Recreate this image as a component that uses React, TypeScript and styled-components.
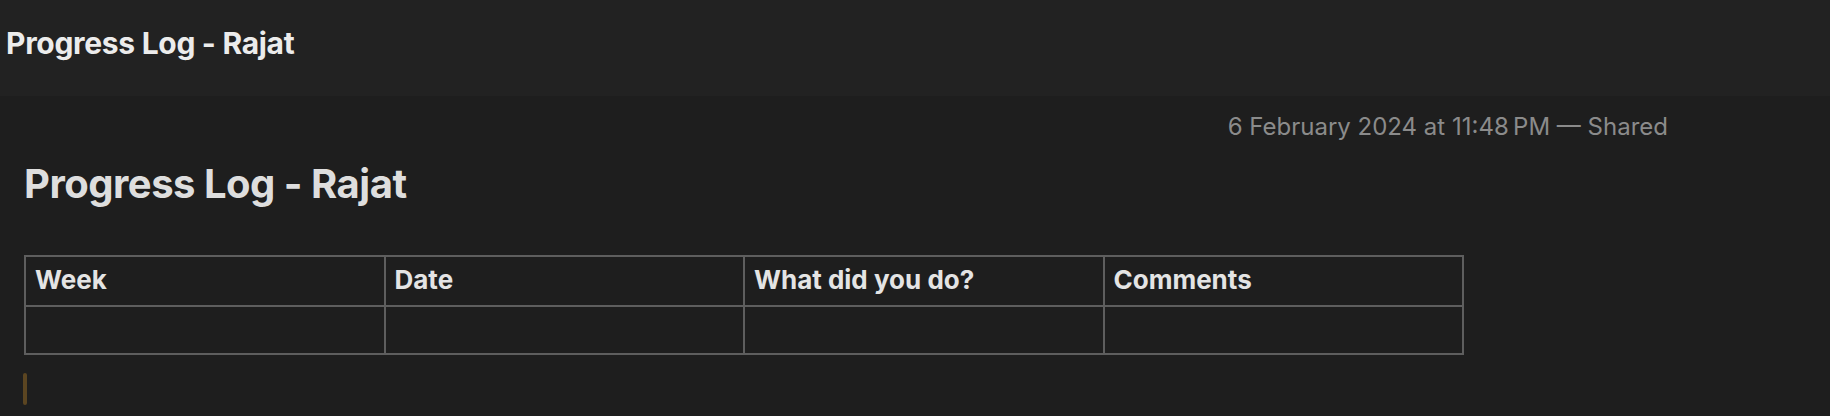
import React from "react";
import styled, { createGlobalStyle } from "styled-components";

const GlobalStyle = createGlobalStyle`
  html, body {
    margin: 0;
    padding: 0;
    background: #1e1e1e;
    font-family: Inter, "Noto Sans", "Liberation Sans", sans-serif;
  }
  * { box-sizing: border-box; }
`;

const Page = styled.div`
  width: 1830px;
  height: 416px;
  overflow: hidden;
  background: #1e1e1e;
  display: flex;
  flex-direction: column;
`;

const TopBar = styled.header`
  height: 96px;
  flex: none;
  background: #222222;
  padding: 28px 0 0 6px;
`;

const BarTitle = styled.h1`
  margin: 0;
  font-size: 30px;
  line-height: 30px;
  font-weight: 700;
  color: #ececec;
  letter-spacing: -0.3px;
`;

const Content = styled.main`
  padding: 19px 0 0 24px;
  display: flex;
  flex-direction: column;
`;

const MetaRow = styled.div`
  display: flex;
  justify-content: flex-end;
  padding-right: 162px;
`;

const Meta = styled.span`
  font-size: 24px;
  line-height: 24px;
  color: #8b8b8b;
`;

const NoteTitle = styled.h2`
  margin: 24px 0 0 0;
  font-size: 40px;
  line-height: 41px;
  font-weight: 700;
  color: #dedede;
  letter-spacing: -0.5px;
`;

const Table = styled.table`
  margin-top: 51px;
  width: 1440px;
  border-collapse: collapse;
  table-layout: fixed;
  border: 2px solid #5e5e5e;
`;

const HeadCell = styled.th`
  border: 2px solid #5e5e5e;
  height: 50px;
  padding: 0 9px 4px 9px;
  text-align: left;
  vertical-align: middle;
  font-size: 26px;
  font-weight: 700;
  color: #e4e4e4;
`;

const BodyCell = styled.td`
  border: 2px solid #5e5e5e;
  height: 48px;
  padding: 0 9px;
`;

const Caret = styled.div`
  margin-top: 18px;
  margin-left: -1px;
  width: 4px;
  height: 32px;
  border-radius: 2px;
  background: #5b4521;
`;

const columns = ["Week", "Date", "What did you do?", "Comments"];

export default function App() {
  return (
    <>
      <GlobalStyle />
      <Page>
        <TopBar>
          <BarTitle>Progress Log - Rajat</BarTitle>
        </TopBar>
        <Content>
          <MetaRow>
            <Meta>6 February 2024 at 11:48&#8239;PM — Shared</Meta>
          </MetaRow>
          <NoteTitle>Progress Log - Rajat</NoteTitle>
          <Table>
            <thead>
              <tr>
                {columns.map((c) => (
                  <HeadCell key={c}>{c}</HeadCell>
                ))}
              </tr>
            </thead>
            <tbody>
              <tr>
                {columns.map((c) => (
                  <BodyCell key={c} />
                ))}
              </tr>
            </tbody>
          </Table>
          <Caret />
        </Content>
      </Page>
    </>
  );
}
